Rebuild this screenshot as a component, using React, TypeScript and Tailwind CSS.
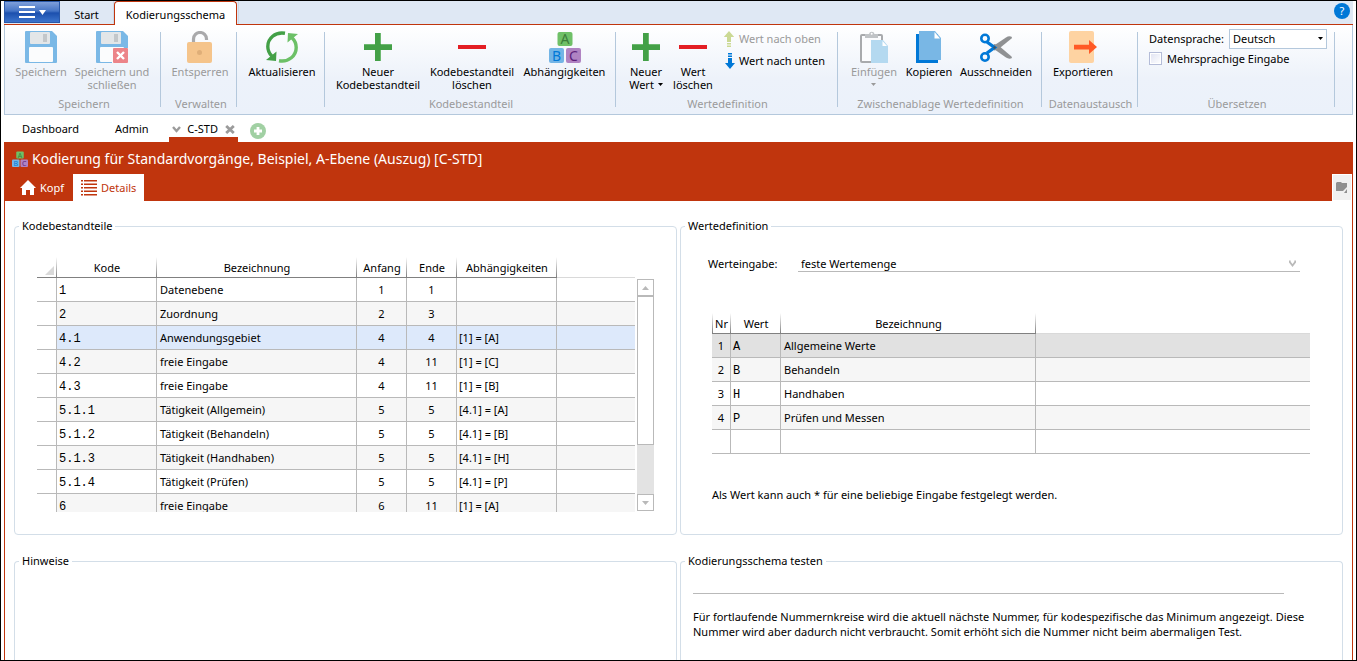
import type { ReactNode } from "react";

const codeRows = [
  { code: "1", label: "Datenebene", start: 1, end: 1, dep: "" },
  { code: "2", label: "Zuordnung", start: 2, end: 3, dep: "" },
  { code: "4.1", label: "Anwendungsgebiet", start: 4, end: 4, dep: "[1] = [A]" },
  { code: "4.2", label: "freie Eingabe", start: 4, end: 11, dep: "[1] = [C]" },
  { code: "4.3", label: "freie Eingabe", start: 4, end: 11, dep: "[1] = [B]" },
  { code: "5.1.1", label: "Tätigkeit (Allgemein)", start: 5, end: 5, dep: "[4.1] = [A]" },
  { code: "5.1.2", label: "Tätigkeit (Behandeln)", start: 5, end: 5, dep: "[4.1] = [B]" },
  { code: "5.1.3", label: "Tätigkeit (Handhaben)", start: 5, end: 5, dep: "[4.1] = [H]" },
  { code: "5.1.4", label: "Tätigkeit (Prüfen)", start: 5, end: 5, dep: "[4.1] = [P]" },
  { code: "6", label: "freie Eingabe", start: 6, end: 11, dep: "[1] = [A]" },
];

const valueRows = [
  { nr: "1", value: "A", label: "Allgemeine Werte" },
  { nr: "2", value: "B", label: "Behandeln" },
  { nr: "3", value: "H", label: "Handhaben" },
  { nr: "4", value: "P", label: "Prüfen und Messen" },
  { nr: "", value: "", label: "" },
];

const SELECTED_CODE = "4.1";

const headBase =
  "h-[21px] border-b border-[#808080] bg-[length:1px_100%] bg-no-repeat p-0 pt-0.5 text-center font-normal leading-[18px]";
const headLine = "bg-[linear-gradient(to_bottom,transparent,#808080)] bg-right";
const headLineBoth =
  "bg-[linear-gradient(to_bottom,transparent,#808080),linear-gradient(to_bottom,transparent,#808080)] bg-[position:left,right]";
const headLast = "h-[21px] border-b border-[#d9d9d9] p-0";
const cellBase = "h-6 border-r border-b border-[#b9b9b9] pb-0 leading-5";
const cellLast = "h-6 border-b border-[#b9b9b9] p-0";
const mono = "pt-0.5 font-['Liberation_Mono',monospace] text-[12px]";

function SaveIcon({ close = false }: { close?: boolean }) {
  return (
    <svg width="32" height="32" viewBox="0 0 32 32">
      <path d="M1 0H27L32 5V31a1 1 0 0 1-1 1H1a1 1 0 0 1-1-1V1a1 1 0 0 1 1-1z" fill="#7ab8e6" />
      <rect x="5" y="1" width="20" height="12" rx="1" fill="#e3e6e8" />
      <rect x="18" y="3" width="4" height="8" fill="#c3c7ca" />
      <rect x="4" y="16" width="24" height="15" rx="1" fill="#fbfcfd" />
      {close && (
        <>
          <path d="M16 17h16v15H16z" fill="#fbfcfd" />
          <rect x="17" y="17" width="15" height="15" rx="1" fill="#ec8489" />
          <path d="M21 21l7 7M28 21l-7 7" stroke="#fff" strokeWidth="2.4" />
        </>
      )}
    </svg>
  );
}

function UnlockIcon() {
  return (
    <svg width="26" height="32" viewBox="0 0 26 32">
      <path d="M6.500 12V8a6.500 6.500 0 0 1 13 0v1" fill="none" stroke="#a9a9ab" strokeWidth="3.200" />
      <rect x="0" y="11" width="25" height="21" rx="2" fill="#f5c48b" />
      <circle cx="12.500" cy="21.500" r="2.500" fill="#dfae78" />
    </svg>
  );
}

function RefreshIcon() {
  return (
    <svg width="34" height="32" viewBox="0 0 34 32">
      <path d="M20 2.200C10 .5 2.800 7.500 2.800 15.500c0 4 1.500 7 4 9.500" fill="none" stroke="#43a047" strokeWidth="3.400" />
      <path d="M1 29l10 1 .5-9.500z" fill="#43a047" />
      <path d="M14 29.800c10 1.700 17.200-5.300 17.200-13.300 0-4-1.500-7-4-9.500" fill="none" stroke="#6cc067" strokeWidth="3.400" />
      <path d="M33 3L23 2l-.5 9.500z" fill="#6cc067" />
    </svg>
  );
}

function PlusIcon() {
  return (
    <svg width="28" height="32" viewBox="0 0 28 32">
      <path d="M11 2h6v28h-6z" fill="#43a047" />
      <path d="M0 13h28v6H0z" fill="#43a047" />
      <path d="M0 13h11v1H0zM17 13h11v1H17zM16 2h1v11h-1zM16 19h1v11h-1z" fill="#6db870" />
    </svg>
  );
}

function MinusIcon() {
  return (
    <svg width="28" height="32" viewBox="0 0 28 32">
      <path d="M0 14h28v4H0z" fill="#e31e24" />
    </svg>
  );
}

function BlocksIcon({ size = 32 }: { size?: number }) {
  return (
    <svg
      width={size}
      height={size}
      viewBox="0 0 32 32"
      className="shrink-0 font-['Noto_Sans',sans-serif]"
      fontSize="14"
      textAnchor="middle"
    >
      <rect x="8.500" y="1" width="15" height="14" rx="2" fill="#6fc067" />
      <rect x="0" y="17" width="15" height="15" rx="2" fill="#73b5e6" />
      <rect x="17" y="17" width="15" height="15" rx="2" fill="#b083c2" />
      <text x="16" y="13" fill="#3c7d3a">A</text>
      <text x="7.500" y="29.500" fill="#0078d7">B</text>
      <text x="24.500" y="29.500" fill="#5c1f7a">C</text>
    </svg>
  );
}

function MoveIcon({ down = false }: { down?: boolean }) {
  return (
    <svg width="12" height="16" viewBox="0 0 12 16" className="shrink-0">
      {down ? (
        <path d="M5 0h4v1.500H5zM5 2.500h4V4H5zM5 5h4v5h3L7 16 2 10h3z" fill="#0078d7" />
      ) : (
        <path d="M4 14.500h4V16H4zM4 12h4v1.500H4zM4 11V6H.8L6 0l5.200 6H8v5z" fill="#cbd994" />
      )}
    </svg>
  );
}

function PasteIcon() {
  return (
    <svg width="28" height="32" viewBox="0 0 28 32">
      <rect x="1" y="4" width="21" height="27" rx="1" fill="#fbfcfe" stroke="#a8aaad" strokeWidth="2" />
      <path d="M5 3h4a2.800 2.800 0 0 1 5.500 0H18v4H5z" fill="#c0c3c6" />
      <circle cx="11.700" cy="2.700" r="1" fill="#fff" />
      <path d="M11 9h12l5 6v17H11z" fill="#b4d9f0" />
      <path d="M22.500 10v5H27z" fill="#fff" />
    </svg>
  );
}

function CopyIcon() {
  return (
    <svg width="26" height="32" viewBox="0 0 26 32">
      <path d="M0 3h22v29H0z" fill="#0078d7" />
      <path d="M3 0h16l6 7v22H3z" fill="#79b7e5" />
      <path d="M18.500 1v6.500H24z" fill="#fff" />
    </svg>
  );
}

function CutIcon() {
  return (
    <svg width="32" height="32" viewBox="0 0 32 32">
      <path d="M12.500 15.500L26 6.500c2-1.300 4-1.500 6-.5l-.5 1.500L18 18.500l-4 1z" fill="#8f9193" />
      <path d="M12.500 17L26 26.500c2 1.300 4 1.500 6 .5l-.5-1.500L18 14l-4-1z" fill="#8f9193" />
      <path d="M7 11l7.500 5.500L7 22" fill="none" stroke="#0078d7" strokeWidth="3.400" />
      <circle cx="5" cy="7.500" r="3.700" fill="none" stroke="#0078d7" strokeWidth="2.600" />
      <circle cx="5" cy="26" r="3.700" fill="none" stroke="#0078d7" strokeWidth="2.600" />
      <circle cx="14.500" cy="16.500" r="1.200" fill="#4c5055" />
    </svg>
  );
}

function ExportIcon() {
  return (
    <svg width="28" height="32" viewBox="0 0 28 32">
      <rect width="25" height="32" rx="2" fill="#fed3a2" />
      <path d="M5 13.700h15V9l8 7-8 7v-4.500H5z" fill="#ff5a26" />
    </svg>
  );
}

function RibbonGroup({
  label,
  className,
  children,
}: {
  label: string;
  className: string;
  children: ReactNode;
}) {
  return (
    <section
      aria-label={label || undefined}
      className={`flex h-[75px] shrink-0 flex-col justify-between border-r border-[#b4c8dc] ${className}`}
    >
      <div className="-mt-1 flex h-[62px] items-start">{children}</div>
      <p className="-mb-[3px] pl-0.5 text-center leading-[13px] whitespace-nowrap text-[#9a9a9a]">
        {label}
      </p>
    </section>
  );
}

function RibbonButton({
  icon,
  lines,
  className,
  disabled = false,
  menu = false,
}: {
  icon: ReactNode;
  lines: string[];
  className: string;
  disabled?: boolean;
  menu?: boolean;
}) {
  return (
    <button
      type="button"
      disabled={disabled}
      className={`flex shrink-0 flex-col items-center gap-0.5 pt-[3px] leading-[13px] whitespace-nowrap disabled:text-[#9a9a9a] ${className}`}
    >
      {icon}
      <span className="flex flex-col items-center">
        {lines.map((line, i) => (
          <span key={line} className="flex items-center gap-1">
            {line}
            {menu && i > 0 && <MenuArrow />}
          </span>
        ))}
        {menu && lines.length === 1 && (
          <span className="flex h-[13px] items-center">
            <MenuArrow />
          </span>
        )}
      </span>
    </button>
  );
}

function MenuArrow() {
  return (
    <svg width="5" height="3" viewBox="0 0 5 3" fill="currentColor">
      <path d="M0 0h5L2.500 3z" />
    </svg>
  );
}

function Ribbon() {
  return (
    <div className="flex h-[90px] items-start overflow-hidden border border-t-0 border-[#b4c8dc] bg-[linear-gradient(to_bottom,#ffffff,#edf2fa_60%,#ebf1fa)] pt-[7px]">
      <RibbonGroup label="Speichern" className="w-[156px] pl-[1px]">
        <RibbonButton icon={<SaveIcon />} lines={["Speichern"]} className="w-[70px]" disabled />
        <RibbonButton icon={<SaveIcon close />} lines={["Speichern und", "schließen"]} className="w-[72px]" disabled />
      </RibbonGroup>
      <RibbonGroup label="Verwalten" className="w-[76px] pl-[3px]">
        <RibbonButton icon={<UnlockIcon />} lines={["Entsperren"]} className="w-[72px]" disabled />
      </RibbonGroup>
      <RibbonGroup label="" className="w-[88px]">
        <RibbonButton icon={<RefreshIcon />} lines={["Aktualisieren"]} className="w-[90px]" />
      </RibbonGroup>
      <RibbonGroup label="Kodebestandteil" className="w-[291px]">
        <RibbonButton icon={<PlusIcon />} lines={["Neuer", "Kodebestandteil"]} className="w-[106px]" />
        <RibbonButton icon={<MinusIcon />} lines={["Kodebestandteil", "löschen"]} className="w-[82px]" />
        <RibbonButton icon={<BlocksIcon />} lines={["Abhängigkeiten"]} className="w-[103px]" />
      </RibbonGroup>
      <RibbonGroup label="Wertedefinition" className="w-[222px]">
        <RibbonButton icon={<PlusIcon />} lines={["Neuer", "Wert"]} className="w-[60px]" menu />
        <RibbonButton icon={<MinusIcon />} lines={["Wert", "löschen"]} className="w-[34px]" />
        <div className="flex flex-col gap-1.5 pt-[3px] pl-[13px] whitespace-nowrap">
          <button type="button" disabled className="flex items-center gap-1 leading-4 disabled:text-[#9a9a9a]">
            <MoveIcon />
            Wert nach oben
          </button>
          <button type="button" className="flex items-center gap-1 leading-4">
            <MoveIcon down />
            Wert nach unten
          </button>
        </div>
      </RibbonGroup>
      <RibbonGroup label="Zwischenablage Wertedefinition" className="w-[204px]">
        <RibbonButton icon={<PasteIcon />} lines={["Einfügen"]} className="ml-[7px] w-[58px]" disabled menu />
        <RibbonButton icon={<CopyIcon />} lines={["Kopieren"]} className="w-[52px]" />
        <RibbonButton icon={<CutIcon />} lines={["Ausschneiden"]} className="w-[82px]" />
      </RibbonGroup>
      <RibbonGroup label="Datenaustausch" className="w-[96px]">
        <RibbonButton icon={<ExportIcon />} lines={["Exportieren"]} className="w-[82px]" />
      </RibbonGroup>
      <RibbonGroup label="Übersetzen" className="w-[197px]">
        <div className="flex flex-1 flex-col gap-[3px] pt-[1px] pr-[7px] pl-[11px]">
          <div className="flex items-center justify-between">
            <label htmlFor="dataLanguage">Datensprache:</label>
            <span className="relative">
              <select
                id="dataLanguage"
                className="h-5 w-[98px] appearance-none border border-[#b4c8dc] bg-white px-[3px] outline-none"
              >
                <option>Deutsch</option>
              </select>
              <span className="pointer-events-none absolute top-2 right-1">
                <MenuArrow />
              </span>
            </span>
          </div>
          <label className="flex items-center gap-[5px] leading-[13px]">
            <input
              type="checkbox"
              className="h-[13px] w-[13px] appearance-none border border-[#b4bcd8] bg-[linear-gradient(135deg,#dfe2f2,#ffffff)] shadow-[inset_0_0_0_1px_#ffffff]"
            />
            Mehrsprachige Eingabe
          </label>
        </div>
      </RibbonGroup>
    </div>
  );
}

function Panel({
  title,
  className = "",
  children,
}: {
  title: string;
  className?: string;
  children?: ReactNode;
}) {
  return (
    <fieldset className={`min-w-0 rounded border border-[#d3dee8] ${className}`}>
      <legend className="ml-1 px-[3px] leading-4">{title}</legend>
      {children}
    </fieldset>
  );
}

function CodeTable() {
  return (
    <div className="flex h-[255px]">
      <div className="min-w-0 flex-1 overflow-hidden">
        <table className="w-full table-fixed border-separate border-spacing-0">
          <thead>
            <tr>
              <th className={`w-5 ${headBase} ${headLine}`}>
                <svg width="9" height="9" viewBox="0 0 9 9" className="mt-1 ml-2">
                  <path d="M9 0v9H0z" fill="#d9d9d9" />
                </svg>
              </th>
              <th className={`w-[100px] ${headBase} ${headLine}`}>Kode</th>
              <th className={`w-[200px] ${headBase} ${headLine}`}>Bezeichnung</th>
              <th className={`w-[50px] ${headBase} ${headLine}`}>Anfang</th>
              <th className={`w-[50px] ${headBase} ${headLine}`}>Ende</th>
              <th className={`w-[100px] ${headBase} ${headLine}`}>Abhängigkeiten</th>
              <th className={headLast} />
            </tr>
          </thead>
          <tbody>
            {codeRows.map((row) => (
              <tr
                key={row.code}
                className={row.code === SELECTED_CODE ? "bg-[#dde9fb]" : "even:bg-[#f6f6f6]"}
              >
                <td className={`bg-white ${cellBase}`} />
                <td className={`pl-[2px] ${cellBase} ${mono}`}>{row.code}</td>
                <td className={`pl-[3px] ${cellBase}`}>{row.label}</td>
                <td className={`text-center ${cellBase}`}>{row.start}</td>
                <td className={`text-center ${cellBase}`}>{row.end}</td>
                <td className={`pl-[2px] ${cellBase}`}>{row.dep}</td>
                <td className={cellLast} />
              </tr>
            ))}
          </tbody>
        </table>
      </div>
      <div className="mt-[22px] mb-[1px] ml-[2px] flex w-[17px] flex-col bg-[#e3e3e3]">
        <button
          type="button"
          aria-label="Nach oben"
          className="grid h-[17px] place-items-center border border-[#b9b9b9] bg-white text-[#b9b9b9]"
        >
          <svg width="7" height="4" viewBox="0 0 7 4" fill="currentColor">
            <path d="M0 4h7L3.500 0z" />
          </svg>
        </button>
        <div className="h-[149px] border border-[#b9b9b9] bg-white" />
        <button
          type="button"
          aria-label="Nach unten"
          className="mt-auto grid h-[17px] place-items-center border border-[#b9b9b9] bg-white text-[#b9b9b9]"
        >
          <svg width="7" height="4" viewBox="0 0 7 4" fill="currentColor">
            <path d="M0 0h7L3.500 4z" />
          </svg>
        </button>
      </div>
    </div>
  );
}

function ValueTable() {
  return (
    <table className="w-full table-fixed border-separate border-spacing-0">
      <thead>
        <tr>
          <th className={`w-[19px] ${headBase} ${headLineBoth}`}>Nr</th>
          <th className={`w-[50px] ${headBase} ${headLine}`}>Wert</th>
          <th className={`w-[255px] ${headBase} ${headLine}`}>Bezeichnung</th>
          <th className={headLast} />
        </tr>
      </thead>
      <tbody>
        {valueRows.map((row) => (
          <tr key={row.nr} className="first:bg-[#e1e1e1] even:bg-[#f6f6f6]">
            <td className={`text-center ${cellBase}`}>{row.nr}</td>
            <td className={`pl-[2px] ${cellBase} ${mono}`}>{row.value}</td>
            <td className={`pl-[3px] ${cellBase}`}>{row.label}</td>
            <td className={cellLast} />
          </tr>
        ))}
      </tbody>
    </table>
  );
}

export default function App() {
  return (
    <div className="flex min-h-screen flex-col border border-black bg-white px-[3px] font-['Noto_Sans',sans-serif] text-[11px] leading-4 text-black">
      <nav className="flex h-6 border-b border-[#c0350d] bg-[#dfe8f4]">
        <button
          type="button"
          aria-label="Menü"
          className="flex h-[22px] w-14 items-center justify-center gap-1 border border-[#2a58a8] bg-[linear-gradient(to_bottom,#7f9fda,#4675c6_45%,#1c50ae_55%,#3c74cc)]"
        >
          <svg width="16" height="12" viewBox="0 0 16 12" fill="#fff">
            <path d="M0 0h16v2H0zM0 5h16v2H0zM0 10h16v2H0z" />
          </svg>
          <svg width="7" height="5" viewBox="0 0 7 5" fill="#fff">
            <path d="M0 0h7L3.500 5z" />
          </svg>
        </button>
        <button type="button" className="w-[54px] border-r border-[#ccd8e8] pt-1">
          Start
        </button>
        <button
          type="button"
          className="-mb-px w-[123px] rounded-t border border-b-0 border-[#c0350d] bg-white pt-[3px]"
        >
          Kodierungsschema
        </button>
        <span className="w-0.5 border-r border-[#ccd8e8]" />
        <button
          type="button"
          aria-label="Hilfe"
          className="mt-0.5 mr-[3px] ml-auto h-4 w-4 rounded-full bg-[#0078d7] leading-4 text-white"
        >
          ?
        </button>
      </nav>

      <Ribbon />

      <nav className="flex h-[27px] items-stretch pt-[2px]">
        <a href="#dashboard" className="pt-1 pl-[18px]">
          Dashboard
        </a>
        <a href="#admin" className="pt-1 pr-5 pl-9">
          Admin
        </a>
        <div className="flex w-[69px] items-center justify-between border-b-[5px] border-[#c0350d] px-[3px] pt-1">
          <svg width="9" height="7" viewBox="0 0 9 7">
            <path d="M1 1l3.500 4L8 1" fill="none" stroke="#9b9b9b" strokeWidth="2.400" />
          </svg>
          <a href="#c-std">C-STD</a>
          <button type="button" aria-label="Schließen">
            <svg width="10" height="9" viewBox="0 0 10 9">
              <path d="M1.200 1l7.600 7M8.800 1L1.200 8" fill="none" stroke="#9b9b9b" strokeWidth="2.800" />
            </svg>
          </button>
        </div>
        <button type="button" aria-label="Neuer Tab" className="ml-3 pt-[3px]">
          <svg width="16" height="16" viewBox="0 0 16 16">
            <circle cx="8" cy="8" r="8" fill="#a1d0a3" />
            <path d="M8 4v8M4 8h8" stroke="#fff" strokeWidth="2.800" />
          </svg>
        </button>
      </nav>

      <header className="bg-[#c0350d] text-white">
        <h1 className="flex h-8 items-center gap-1 pt-0.5 pl-2 text-[14px] leading-5">
          <BlocksIcon size={16} />
          Kodierung für Standardvorgänge, Beispiel, A-Ebene (Auszug) [C-STD]
        </h1>
        <div className="flex h-[27px] items-stretch">
          <button type="button" className="flex w-[69px] items-center gap-1 pl-4">
            <svg width="16" height="15" viewBox="0 0 16 15" fill="#fff">
              <path d="M8 0l8 8h-2v7h-4v-5H6v5H2V8H0z" />
            </svg>
            Kopf
          </button>
          <button type="button" className="flex w-[71px] items-center gap-1 bg-white pl-2 text-[#c0350d]">
            <svg width="16" height="16" viewBox="0 0 16 16" fill="#c0350d">
              <path d="M0 0h2v1.600H0zM3 0h13v1.600H3zM0 3.500h2v1.600H0zM3 3.500h13v1.600H3zM0 7h2v1.600H0zM3 7h13v1.600H3zM0 10.500h2v1.600H0zM3 10.500h13v1.600H3zM0 14h2v1.600H0zM3 14h13v1.600H3z" />
            </svg>
            Details
          </button>
          <button
            type="button"
            aria-label="Ordner"
            className="mr-[1px] ml-auto grid w-5 place-items-center border border-white bg-[#f0f0f0]"
          >
            <svg width="12" height="11" viewBox="0 0 12 11" fill="#8f8f8f">
              <path d="M0 1l1-1h4l1 1h5v4L7 9H0zM11 7v4H8z" />
            </svg>
          </button>
        </div>
      </header>

      <main className="grid flex-1 grid-cols-2 grid-rows-[auto_1fr] gap-x-[3px] gap-y-[18px] border-x border-[#c0350d] px-[9px] pt-[17px]">
        <Panel title="Kodebestandteile">
          <div className="px-[22px] pt-[23px] pb-[22px]">
            <CodeTable />
          </div>
        </Panel>

        <Panel title="Wertedefinition">
          <div className="pt-[22px] pr-8 pl-[27px]">
            <div className="mr-[10px] flex items-center">
              <label htmlFor="valueInput" className="w-[90px]">
                Werteingabe:
              </label>
              <span className="relative flex-1">
                <select
                  id="valueInput"
                  className="block h-4 w-full appearance-none border-b border-[#b9b9b9] bg-white px-[3px] leading-[15px] outline-none"
                >
                  <option>feste Wertemenge</option>
                </select>
                <svg
                  width="7"
                  height="7"
                  viewBox="0 0 7 7"
                  className="pointer-events-none absolute top-1 right-1"
                >
                  <path d="M.8 .5v1.500L3.500 5.500 6.200 2V.5" fill="none" stroke="#b9b9b9" strokeWidth="1.800" />
                </svg>
              </span>
            </div>
            <div className="mt-[41px] ml-1">
              <ValueTable />
              <p className="mt-[33px]">
                Als Wert kann auch * für eine beliebige Eingabe festgelegt werden.
              </p>
            </div>
          </div>
        </Panel>

        <Panel title="Hinweise" className="rounded-b-none border-b-0" />

        <Panel title="Kodierungsschema testen" className="rounded-b-none border-b-0">
          <div className="pr-5 pl-3">
            <input
              type="text"
              aria-label="Kodierungsschema testen"
              className="block h-[25px] w-[591px] max-w-full border-b border-[#b9b9b9] outline-none"
            />
            <p className="mt-[15px] leading-[15px]">
              Für fortlaufende Nummernkreise wird die aktuell nächste Nummer, für kodespezifische das
              Minimum angezeigt. Diese Nummer wird aber dadurch nicht verbraucht. Somit erhöht sich
              die Nummer nicht beim abermaligen Test.
            </p>
          </div>
        </Panel>
      </main>
    </div>
  );
}
